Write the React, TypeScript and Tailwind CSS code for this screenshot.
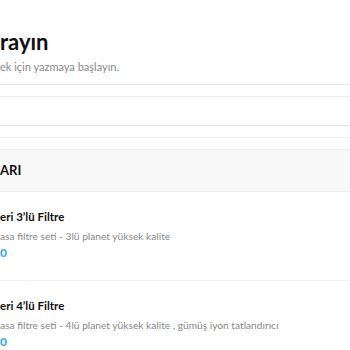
export default function App() {
  const items = [
    {
      title: "eri 3’lü Filtre",
      desc: "asa filtre seti - 3lü planet yüksek kalite",
      price: "0",
    },
    {
      title: "eri 4’lü Filtre",
      desc: "asa filtre seti - 4lü planet yüksek kalite , gümüş iyon tatlandırıcı",
      price: "0",
    },
  ];

  return (
    <div className="w-[350px] h-[350px] overflow-hidden bg-white font-['Lato',sans-serif] text-[#111]">
      {/* heading */}
      <div className="pt-[28px] h-[84px]">
        <h1 className="text-[22px] leading-[28px] font-bold">rayın</h1>
        <p className="mt-[4px] text-[11px] leading-[14px] text-[#8a8a8a]">ek için yazmaya başlayın.</p>
      </div>

      {/* search field */}
      <div className="h-[12px] border-t border-[#e6e6f0]" />
      <div className="h-[29px] border-t border-[#eeeeee]" />
      <div className="h-[12px] border-t border-[#e4e4f0]" />
      <div className="h-[12px] border-t border-[#efefef]" />

      {/* category header */}
      <div className="h-[43px] flex items-center bg-[#f9f9f9] border-y border-[#ececec]">
        <span className="text-[13px] font-bold">ARI</span>
      </div>

      {/* products */}
      <div className="flex flex-col">
        {items.map((item, i) => (
          <div key={i} className={"pt-[17px] h-[89px] " + (i === 0 ? "border-b border-[#eeeef5]" : "")}>
            <div className="text-[11.5px] leading-[16px] font-bold">{item.title}</div>
            <div className="mt-[4px] text-[10.2px] leading-[14px] text-[#8a8a8a]">{item.desc}</div>
            <div className="mt-[3px] text-[12px] leading-[14px] font-black text-[#3aaee6]">{item.price}</div>
          </div>
        ))}
      </div>
    </div>
  );
}
